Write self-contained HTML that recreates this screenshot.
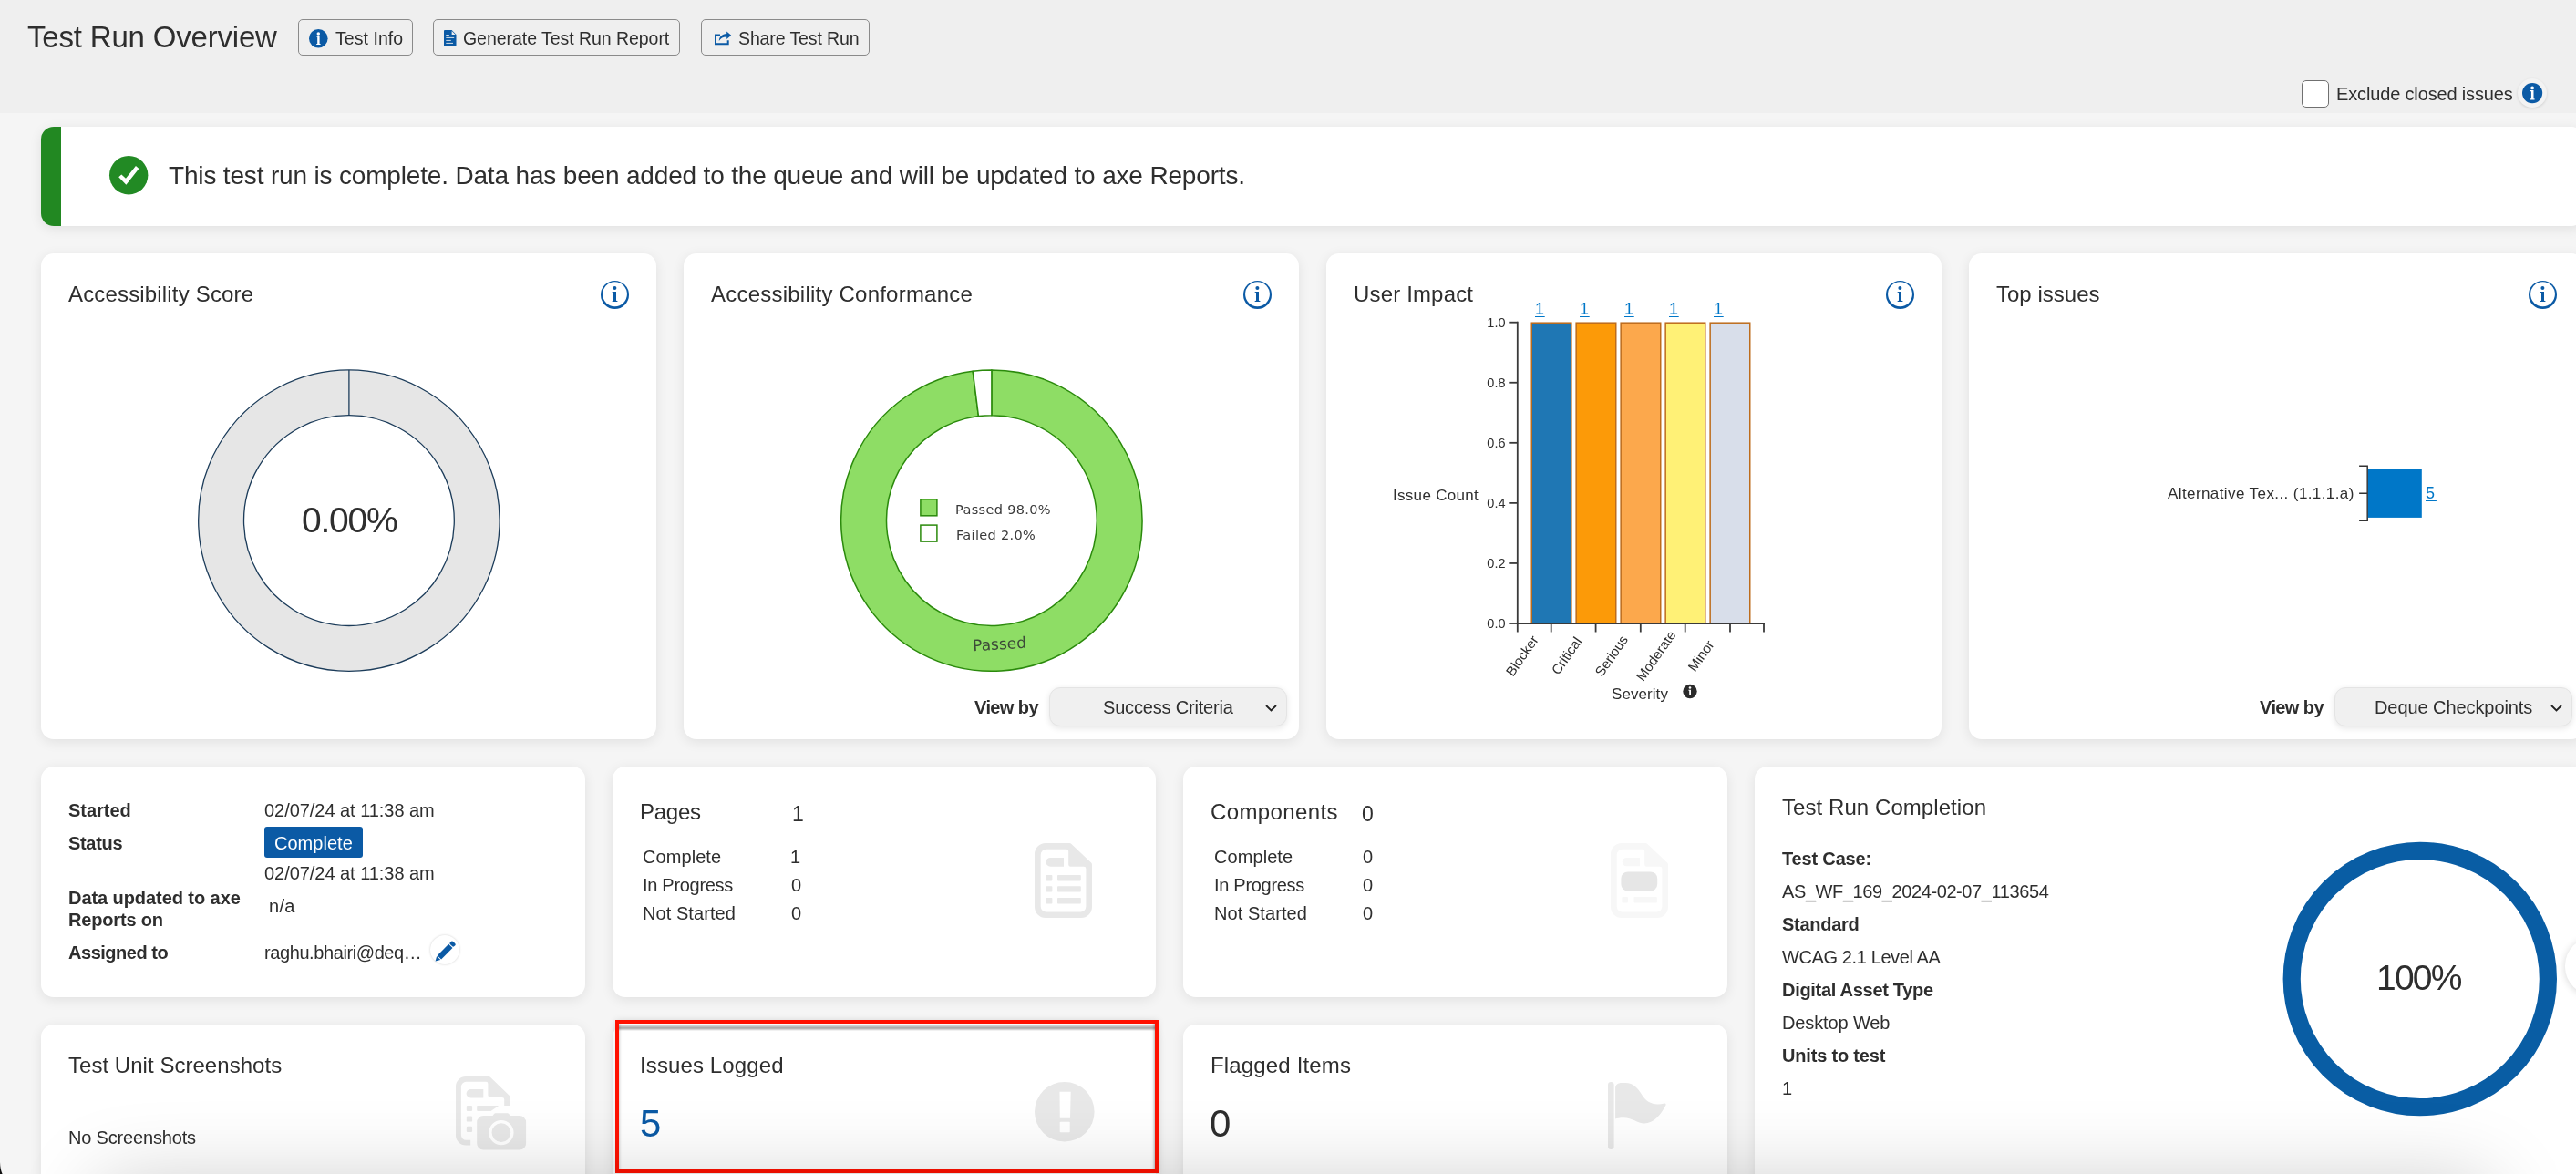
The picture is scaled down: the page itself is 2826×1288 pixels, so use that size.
<!DOCTYPE html>
<html lang="en"><head><meta charset="utf-8"><title>Test Run Overview</title>
<style>
html,body{margin:0;padding:0}
html{overflow:hidden;width:2826px;height:1288px;background:#f5f5f5}
body{width:2826px;height:1288px;overflow:hidden;position:relative;background:#f5f5f5;font-family:"Liberation Sans",sans-serif;color:#2e2e2e}
.t{position:absolute;white-space:pre;line-height:1;will-change:transform;margin:0;font-weight:400}
.a{position:absolute}
.card{position:absolute;background:#fff;border-radius:14px;box-shadow:0 3px 14px rgba(0,0,0,.085)}
.btn{position:absolute;box-sizing:border-box;border:1.2px solid #8a8a8a;border-radius:5px;top:21px;height:39.5px}
.sel{position:absolute;box-sizing:border-box;background:#f0f0f0;border:1px solid #e4e4e4;border-radius:12px;box-shadow:0 2px 7px rgba(0,0,0,.10);height:42.7px;top:753.9px;width:260.7px}
svg{position:absolute;overflow:visible;will-change:transform}
.u{text-decoration:underline;text-decoration-thickness:1.3px;text-underline-offset:2px}
#wrap{position:absolute;left:0;top:0;width:2826px;height:1288px;overflow:hidden}
</style></head><body><div id="wrap">
<div class="a" style="left:0;top:0;width:2826px;height:124px;background:#efefef"></div>
<h1 class="t" style='left:30.00px;top:24px;font-size:33px;letter-spacing:-0.188px;'>Test Run Overview</h1>
<div class="btn" style="left:327px;width:126px"></div>
<svg style="left:338.70px;top:31.70px" width="20.60" height="20.60" viewBox="-10.3 -10.3 20.6 20.6"><circle r="10.3" fill="#0b5aa5"/><circle cx="0" cy="-5.3" r="1.75" fill="#fff"/><path d="M-2.1 -2.9H1.3V5.6H2.3V6.8H-2.1V5.6H-1.1V-1.7H-2.1Z" fill="#fff"/></svg>
<div class="t" style='left:367.80px;top:33px;font-size:19.5px;letter-spacing:0.050px;'>Test Info</div>
<div class="btn" style="left:475px;width:271px"></div>
<svg style="left:487px;top:33.1px" width="13.5" height="18" viewBox="0 0 13.5 18"><path d="M1 0H8.6L13.5 4.9V17a1 1 0 0 1-1 1H1a1 1 0 0 1-1-1V1a1 1 0 0 1 1-1Z" fill="#0b5aa5"/><path d="M8.6 0.9V4.9H12.6Z" fill="#efefef"/><path d="M2.3 5.5H5.8M2.3 8.4H11.2M2.3 11.4H7.8M2.3 14.4H10" stroke="#efefef" stroke-width="0.9" fill="none"/></svg>
<div class="t" style='left:508.30px;top:33px;font-size:19.5px;letter-spacing:-0.043px;'>Generate Test Run Report</div>
<div class="btn" style="left:769px;width:185px"></div>
<svg style="left:783px;top:33px" width="20" height="18" viewBox="783 33 20 18"><path d="M790 38.4H785V48.3H798.7V44.2" fill="none" stroke="#0b5aa5" stroke-width="2"/><path d="M797.2 34.6L802.2 38.8L797.2 43V40.4C793.5 40.3 790.8 41.6 788.8 45C789 40.6 792 37.3 797.2 37.1Z" fill="#0b5aa5"/></svg>
<div class="t" style='left:809.90px;top:33px;font-size:19.5px;letter-spacing:-0.115px;'>Share Test Run</div>
<div class="a" style="left:2525px;top:88px;width:30px;height:30px;box-sizing:border-box;border:1.5px solid #707070;border-radius:5px;background:#fff"></div>
<div class="t" style='left:2562.50px;top:93px;font-size:20px;letter-spacing:-0.150px;'>Exclude closed issues</div>
<div class="a" style="left:2762px;top:86px;width:32.4px;height:32.4px;border-radius:50%;background:#f3f3f3;box-shadow:0 1px 3px rgba(0,0,0,.13)"></div>
<svg style="left:2766.90px;top:91.30px" width="22.20" height="22.20" viewBox="-10.3 -10.3 20.6 20.6"><circle r="10.3" fill="#0b5aa5"/><circle cx="0" cy="-5.3" r="1.75" fill="#fff"/><path d="M-2.1 -2.9H1.3V5.6H2.3V6.8H-2.1V5.6H-1.1V-1.7H-2.1Z" fill="#fff"/></svg>
<div class="card" style="left:45px;top:139px;width:2790px;height:109px;overflow:hidden"><div style="position:absolute;left:0;top:0;width:22px;height:100%;background:#228822"></div></div>
<svg style="left:119.6px;top:171.4px" width="42.4" height="42.4" viewBox="-21.2 -21.2 42.4 42.4"><circle r="21.2" fill="#228a24"/><path d="M-11 2.15L-7.9 -0.66L-3.2 3.58L7.77 -10.2L11.2 -7.3L-2.8 10.6Z" fill="#fff"/></svg>
<div class="t" style='left:184.80px;top:179px;font-size:28px;letter-spacing:-0.170px;'>This test run is complete. Data has been added to the queue and will be updated to axe Reports.</div>
<div class="card" style="left:45px;top:278px;width:675px;height:533px"></div>
<div class="card" style="left:750px;top:278px;width:675px;height:533px"></div>
<div class="card" style="left:1455px;top:278px;width:675px;height:533px"></div>
<div class="card" style="left:2160px;top:278px;width:675px;height:533px"></div>
<h2 class="t" style='left:75.00px;top:311px;font-size:24px;letter-spacing:0.167px;'>Accessibility Score</h2>
<svg style="left:659.00px;top:307.80px" width="31" height="31" viewBox="-15.5 -15.5 31 31"><circle r="15.5" fill="#0b5aa5"/><circle cx="0" cy="-0.75" r="13.4" fill="#fff"/><circle cx="-0.1" cy="-7.4" r="2" fill="#0b5aa5"/><path d="M-2.9 -3.6H1.5V6.3L3 6.8V7.6H-2.9V6.8L-1.5 6.3V-2.4L-2.9 -2.8Z" fill="#0b5aa5"/></svg>
<h2 class="t" style='left:780.00px;top:311px;font-size:24px;letter-spacing:0.225px;'>Accessibility Conformance</h2>
<svg style="left:1364.00px;top:307.80px" width="31" height="31" viewBox="-15.5 -15.5 31 31"><circle r="15.5" fill="#0b5aa5"/><circle cx="0" cy="-0.75" r="13.4" fill="#fff"/><circle cx="-0.1" cy="-7.4" r="2" fill="#0b5aa5"/><path d="M-2.9 -3.6H1.5V6.3L3 6.8V7.6H-2.9V6.8L-1.5 6.3V-2.4L-2.9 -2.8Z" fill="#0b5aa5"/></svg>
<h2 class="t" style='left:1485.00px;top:311px;font-size:24px;letter-spacing:0.160px;'>User Impact</h2>
<svg style="left:2069.00px;top:307.80px" width="31" height="31" viewBox="-15.5 -15.5 31 31"><circle r="15.5" fill="#0b5aa5"/><circle cx="0" cy="-0.75" r="13.4" fill="#fff"/><circle cx="-0.1" cy="-7.4" r="2" fill="#0b5aa5"/><path d="M-2.9 -3.6H1.5V6.3L3 6.8V7.6H-2.9V6.8L-1.5 6.3V-2.4L-2.9 -2.8Z" fill="#0b5aa5"/></svg>
<h2 class="t" style='left:2190.00px;top:311px;font-size:24px;letter-spacing:0.011px;'>Top issues</h2>
<svg style="left:2774.00px;top:307.80px" width="31" height="31" viewBox="-15.5 -15.5 31 31"><circle r="15.5" fill="#0b5aa5"/><circle cx="0" cy="-0.75" r="13.4" fill="#fff"/><circle cx="-0.1" cy="-7.4" r="2" fill="#0b5aa5"/><path d="M-2.9 -3.6H1.5V6.3L3 6.8V7.6H-2.9V6.8L-1.5 6.3V-2.4L-2.9 -2.8Z" fill="#0b5aa5"/></svg>
<div class="card" style="left:45px;top:841px;width:597px;height:253px"></div>
<div class="card" style="left:671.5px;top:841px;width:596.5px;height:253px"></div>
<div class="card" style="left:1298px;top:841px;width:597px;height:253px"></div>
<div class="card" style="left:1924.5px;top:841px;width:910.5px;height:560px"></div>
<div class="card" style="left:45px;top:1124px;width:597px;height:230px"></div>
<div class="card" style="left:671.5px;top:1124px;width:596.5px;height:230px"></div>
<div class="card" style="left:1298px;top:1124px;width:597px;height:230px"></div>
<div class="a" style="left:675px;top:1119px;width:596px;height:168px;box-sizing:border-box;border:4px solid #ff1100;background:#fff;box-shadow:0 0 7px rgba(0,0,0,.10),inset 3px 0 3px -2px rgba(0,0,0,.18),inset -3px 0 3px -2px rgba(0,0,0,.3)"><div style="position:absolute;left:0;right:0;top:0.8px;height:7.6px;background:linear-gradient(rgba(60,80,80,.13),rgba(0,0,0,.35) 56%,rgba(0,0,0,0))"></div></div>
<svg style="left:0;top:0" width="2826" height="1288" viewBox="0 0 2826 1288">
<path d="M382.9 405.9A165.2 165.2 0 1 1 382.89 405.9ZM382.9 455.7A115.4 115.4 0 1 0 382.91 455.7Z" fill="#e6e6e6" fill-rule="evenodd" stroke="#1c3c5a" stroke-width="1.3"/>
<path d="M382.9 405.9V455.7" stroke="#1c3c5a" stroke-width="1.3"/>
<path d="M1087.90 405.90A165.2 165.2 0 1 1 1067.19 407.20L1073.44 456.61A115.4 115.4 0 1 0 1087.90 455.70Z" fill="#8edd65" stroke="#2b8a0c" stroke-width="1.5" stroke-linejoin="round"/>
<path d="M1067.19 407.20A165.2 165.2 0 0 1 1087.90 405.90L1087.90 455.70A115.4 115.4 0 0 0 1073.44 456.61Z" fill="#fff" stroke="#2b8a0c" stroke-width="1.5" stroke-linejoin="round"/>
<rect x="1009.9" y="547.8" width="18" height="18" fill="#8edd65" stroke="#2b8a0c" stroke-width="1.5"/>
<rect x="1009.9" y="576.1" width="18" height="18" fill="#fff" stroke="#2b8a0c" stroke-width="1.5"/>
<text x="1096.5" y="712.5" font-family='"DejaVu Sans", sans-serif' font-size="17" fill="#3c4a38" text-anchor="middle" transform="rotate(-3.6 1096.5 706.6)">Passed</text>
<rect x="1680.25" y="354.2" width="43.6" height="329.8" fill="#1f77b4" stroke="#bd6c1c" stroke-width="1.5"/>
<rect x="1729.15" y="354.2" width="43.6" height="329.8" fill="#fc9a08" stroke="#bd6c1c" stroke-width="1.5"/>
<rect x="1778.15" y="354.2" width="43.6" height="329.8" fill="#fca84c" stroke="#bd6c1c" stroke-width="1.5"/>
<rect x="1827.15" y="354.2" width="43.6" height="329.8" fill="#fff176" stroke="#bd6c1c" stroke-width="1.5"/>
<rect x="1876.15" y="354.2" width="43.6" height="329.8" fill="#d8deea" stroke="#bd6c1c" stroke-width="1.5"/>
<path d="M1664.8 352.7V685" stroke="#3a3a3a" stroke-width="1.8"/>
<path d="M1663.8 684H1936" stroke="#3a3a3a" stroke-width="1.8"/>
<path d="M1655.3 684.00H1664.8" stroke="#3a3a3a" stroke-width="1.8"/>
<text x="1651.5" y="689.00" font-size="14.5" fill="#2e2e2e" text-anchor="end">0.0</text>
<path d="M1655.3 617.94H1664.8" stroke="#3a3a3a" stroke-width="1.8"/>
<text x="1651.5" y="622.94" font-size="14.5" fill="#2e2e2e" text-anchor="end">0.2</text>
<path d="M1655.3 551.88H1664.8" stroke="#3a3a3a" stroke-width="1.8"/>
<text x="1651.5" y="556.88" font-size="14.5" fill="#2e2e2e" text-anchor="end">0.4</text>
<path d="M1655.3 485.82H1664.8" stroke="#3a3a3a" stroke-width="1.8"/>
<text x="1651.5" y="490.82" font-size="14.5" fill="#2e2e2e" text-anchor="end">0.6</text>
<path d="M1655.3 419.76H1664.8" stroke="#3a3a3a" stroke-width="1.8"/>
<text x="1651.5" y="424.76" font-size="14.5" fill="#2e2e2e" text-anchor="end">0.8</text>
<path d="M1655.3 353.70H1664.8" stroke="#3a3a3a" stroke-width="1.8"/>
<text x="1651.5" y="358.70" font-size="14.5" fill="#2e2e2e" text-anchor="end">1.0</text>
<path d="M1664.8 684V693.5" stroke="#3a3a3a" stroke-width="1.8"/>
<path d="M1701.7 684V693.5" stroke="#3a3a3a" stroke-width="1.8"/>
<path d="M1750.6 684V693.5" stroke="#3a3a3a" stroke-width="1.8"/>
<path d="M1799.8 684V693.5" stroke="#3a3a3a" stroke-width="1.8"/>
<path d="M1848.7 684V693.5" stroke="#3a3a3a" stroke-width="1.8"/>
<path d="M1898 684V693.5" stroke="#3a3a3a" stroke-width="1.8"/>
<path d="M1935 684V693.5" stroke="#3a3a3a" stroke-width="1.8"/>
<text x="1674.0" y="722.4" font-size="15" fill="#2e2e2e" text-anchor="middle" transform="rotate(-55 1674.0 722.4)">Blocker</text>
<text x="1722.9" y="722.4" font-size="15" fill="#2e2e2e" text-anchor="middle" transform="rotate(-55 1722.9 722.4)">Critical</text>
<text x="1772.1" y="722.4" font-size="15" fill="#2e2e2e" text-anchor="middle" transform="rotate(-55 1772.1 722.4)">Serious</text>
<text x="1821.0" y="722.4" font-size="15" fill="#2e2e2e" text-anchor="middle" transform="rotate(-55 1821.0 722.4)">Moderate</text>
<text x="1870.3" y="722.4" font-size="15" fill="#2e2e2e" text-anchor="middle" transform="rotate(-55 1870.3 722.4)">Minor</text>
<circle cx="1854" cy="758.5" r="7.7" fill="#2b2b2b"/><circle cx="1854" cy="754.5" r="1.3" fill="#fff"/><path d="M1852.4 756.7H1855V762H1855.8V763H1852.4V762H1853.2V757.7H1852.4Z" fill="#fff"/>
<path d="M2588.1 511.3H2597.2V571.3H2588.1M2588.1 541.3H2597.2" fill="none" stroke="#333" stroke-width="1.5"/>
<rect x="2597.9" y="514.7" width="58.9" height="53.2" fill="#0077c8"/>
<circle cx="2654.8" cy="1074" r="140.6" fill="none" stroke="#095da4" stroke-width="19.2"/>
</svg>
<div class="t" style='left:330.60px;top:551px;font-size:39px;letter-spacing:-1.250px;'>0.00%</div>
<div class="t" style='left:1048.40px;top:552px;font-size:14.5px;letter-spacing:0.336px;color:#3a3a3a;font-family:"DejaVu Sans", "Liberation Sans", sans-serif;'>Passed 98.0%</div>
<div class="t" style='left:1048.60px;top:580px;font-size:14.5px;letter-spacing:0.320px;color:#3a3a3a;font-family:"DejaVu Sans", "Liberation Sans", sans-serif;'>Failed 2.0%</div>
<div class="t" style='left:1068.80px;top:766px;font-size:20px;letter-spacing:-0.600px;font-weight:700;'>View by</div>
<div class="sel" style="left:1151px"></div>
<div class="t" style='left:1209.60px;top:766px;font-size:20px;letter-spacing:-0.187px;'>Success Criteria</div>
<svg style="left:1387.6px;top:772.5px" width="13" height="8" viewBox="0 0 13 8"><path d="M1 1L6.5 6.5L12 1" fill="none" stroke="#222" stroke-width="1.8"/></svg>
<div class="t" style='left:2478.80px;top:766px;font-size:20px;letter-spacing:-0.600px;font-weight:700;'>View by</div>
<div class="sel" style="left:2561.3px"></div>
<div class="t" style='left:2605.00px;top:766px;font-size:20px;letter-spacing:-0.075px;'>Deque Checkpoints</div>
<svg style="left:2798px;top:772.5px" width="13" height="8" viewBox="0 0 13 8"><path d="M1 1L6.5 6.5L12 1" fill="none" stroke="#222" stroke-width="1.8"/></svg>
<div class="t" style='left:1527.80px;top:535px;font-size:17px;letter-spacing:0.300px;'>Issue Count</div>
<a class="t u" style='left:1684.00px;top:330px;font-size:18px;letter-spacing:0.684px;color:#0077c8;'>1</a>
<a class="t u" style='left:1732.90px;top:330px;font-size:18px;letter-spacing:0.684px;color:#0077c8;'>1</a>
<a class="t u" style='left:1781.90px;top:330px;font-size:18px;letter-spacing:0.684px;color:#0077c8;'>1</a>
<a class="t u" style='left:1830.90px;top:330px;font-size:18px;letter-spacing:0.684px;color:#0077c8;'>1</a>
<a class="t u" style='left:1879.90px;top:330px;font-size:18px;letter-spacing:0.684px;color:#0077c8;'>1</a>
<div class="t" style='left:1768.00px;top:753px;font-size:17px;letter-spacing:0.071px;'>Severity</div>
<div class="t" style='left:2378.30px;top:533px;font-size:17px;letter-spacing:0.407px;'>Alternative Tex... (1.1.1.a)</div>
<a class="t u" style='left:2661.10px;top:532px;font-size:18px;letter-spacing:1.884px;color:#0077c8;'>5</a>
<div class="t" style='left:75.00px;top:879px;font-size:20px;letter-spacing:-0.033px;font-weight:700;'>Started</div>
<div class="t" style='left:289.80px;top:879px;font-size:20px;letter-spacing:-0.042px;'>02/07/24 at 11:38 am</div>
<div class="t" style='left:75.00px;top:915px;font-size:20px;letter-spacing:-0.320px;font-weight:700;'>Status</div>
<div class="a" style="left:289.6px;top:907.3px;width:108px;height:33.8px;border-radius:3px;background:#0b5aa5"></div>
<div class="t" style='left:300.50px;top:915px;font-size:20px;letter-spacing:0.029px;color:#fff;'>Complete</div>
<div class="t" style='left:289.80px;top:948px;font-size:20px;letter-spacing:-0.042px;'>02/07/24 at 11:38 am</div>
<div class="t" style='left:75.00px;top:975px;font-size:20px;letter-spacing:-0.067px;font-weight:700;'>Data updated to axe</div>
<div class="t" style='left:75.00px;top:999px;font-size:20px;letter-spacing:-0.167px;font-weight:700;'>Reports on</div>
<div class="t" style='left:295.20px;top:984px;font-size:20px;letter-spacing:0.300px;'>n/a</div>
<div class="t" style='left:75.00px;top:1035px;font-size:20px;letter-spacing:-0.470px;font-weight:700;'>Assigned to</div>
<div class="t" style='left:289.80px;top:1035px;font-size:20px;letter-spacing:-0.406px;'>raghu.bhairi@deq…</div>
<div class="a" style="left:472.300px;top:1026.300px;width:32.100px;height:32.100px;border-radius:50%;background:#fff;box-shadow:0 0 2.500px rgba(0,0,0,.2)"></div>
<svg style="left:0;top:0" width="2826" height="1288" viewBox="0 0 2826 1288"><g transform="translate(477.6 1054.6) rotate(-45)" fill="#0b5aa5"><path d="M0 0L5.100 -2.900V2.900Z"/><path d="M6.100 -3.050H23.700V3.050H6.100Z"/><rect x="24.700" y="-3.050" width="4.300" height="6.100" rx="1.300"/></g></svg>
<h2 class="t" style='left:701.50px;top:879px;font-size:24px;letter-spacing:-0.250px;'>Pages</h2>
<div class="t" style='left:868.50px;top:882px;font-size:23px;'>1</div>
<div class="t" style='left:705.10px;top:930px;font-size:20px;letter-spacing:0.071px;'>Complete</div>
<div class="t" style='left:867.00px;top:930px;font-size:20px;'>1</div>
<div class="t" style='left:705.10px;top:961px;font-size:20px;letter-spacing:-0.300px;'>In Progress</div>
<div class="t" style='left:868.00px;top:961px;font-size:20px;'>0</div>
<div class="t" style='left:705.10px;top:992px;font-size:20px;letter-spacing:0.070px;'>Not Started</div>
<div class="t" style='left:868.00px;top:992px;font-size:20px;'>0</div>
<h2 class="t" style='left:1328.00px;top:879px;font-size:24px;letter-spacing:0.378px;'>Components</h2>
<div class="t" style='left:1493.80px;top:882px;font-size:23px;'>0</div>
<div class="t" style='left:1331.60px;top:930px;font-size:20px;letter-spacing:0.071px;'>Complete</div>
<div class="t" style='left:1494.80px;top:930px;font-size:20px;'>0</div>
<div class="t" style='left:1331.60px;top:961px;font-size:20px;letter-spacing:-0.300px;'>In Progress</div>
<div class="t" style='left:1494.80px;top:961px;font-size:20px;'>0</div>
<div class="t" style='left:1331.60px;top:992px;font-size:20px;letter-spacing:0.070px;'>Not Started</div>
<div class="t" style='left:1494.80px;top:992px;font-size:20px;'>0</div>
<svg style="left:1135.1px;top:925px" width="63" height="82" viewBox="0 0 63 82"><path d="M12 0H38.3Q39.500 0 40.4 0.900L62.100 21.600Q63 22.500 63 23.700V70a12 12 0 0 1-12 12H12a12 12 0 0 1-12-12V12a12 12 0 0 1 12-12Z" fill="#e8e8e8"/><path d="M12.700 6.700H35a2.200 2.200 0 0 1 2.200 2.200V23.500a2.300 2.300 0 0 0 2.300 2.300H54a2.400 2.400 0 0 1 2.400 2.400V69.400a6 6 0 0 1-6 6H12.700a6 6 0 0 1-6-6V12.700a6 6 0 0 1 6-6Z" fill="#fff"/><g fill="#e8e8e8"><path d="M17.400 15.900H32V25.800H17.400a4.950 4.950 0 0 1 0-9.900Z"/><rect x="12.400" y="35.100" width="7" height="6.300" rx="0.800"/><rect x="25" y="35.100" width="25.800" height="6.300" rx="0.800"/><rect x="12.400" y="47.300" width="7" height="6.300" rx="0.800"/><rect x="25" y="47.300" width="25.800" height="6.300" rx="0.800"/><rect x="12.400" y="59.900" width="7" height="6.600" rx="0.800"/><rect x="25" y="59.900" width="25.800" height="6.600" rx="0.800"/></g></svg>
<svg style="left:1767px;top:925px" width="63" height="82" viewBox="0 0 63 82"><path d="M12 0H38.3Q39.500 0 40.4 0.900L62.100 21.600Q63 22.500 63 23.700V70a12 12 0 0 1-12 12H12a12 12 0 0 1-12-12V12a12 12 0 0 1 12-12Z" fill="#f7f7f7"/><path d="M12.700 6.700H35a2.200 2.200 0 0 1 2.200 2.200V23.500a2.300 2.300 0 0 0 2.300 2.300H54a2.400 2.400 0 0 1 2.400 2.400V69.400a6 6 0 0 1-6 6H12.700a6 6 0 0 1-6-6V12.700a6 6 0 0 1 6-6Z" fill="#fff"/><g fill="#f7f7f7"><path d="M17.400 15.900H32V25.300H17.400a4.700 4.700 0 0 1 0-9.400Z"/><rect x="12.400" y="59" width="6.500" height="6.600" rx="0.800"/><rect x="25.500" y="59" width="25.300" height="6.600" rx="0.800"/></g><rect x="11.400" y="31.400" width="39.800" height="21.100" rx="7.500" fill="#e6e6e6"/></svg>
<h2 class="t" style='left:1954.50px;top:874px;font-size:24px;letter-spacing:0.067px;'>Test Run Completion</h2>
<div class="t" style='left:1954.50px;top:932px;font-size:20px;letter-spacing:-0.167px;font-weight:700;'>Test Case:</div>
<div class="t" style='left:1954.50px;top:968px;font-size:20px;letter-spacing:-0.400px;'>AS_WF_169_2024-02-07_113654</div>
<div class="t" style='left:1954.50px;top:1004px;font-size:20px;letter-spacing:-0.271px;font-weight:700;'>Standard</div>
<div class="t" style='left:1954.50px;top:1040px;font-size:20px;letter-spacing:-0.387px;'>WCAG 2.1 Level AA</div>
<div class="t" style='left:1954.50px;top:1076px;font-size:20px;letter-spacing:-0.294px;font-weight:700;'>Digital Asset Type</div>
<div class="t" style='left:1954.50px;top:1112px;font-size:20px;letter-spacing:-0.120px;'>Desktop Web</div>
<div class="t" style='left:1954.50px;top:1148px;font-size:20px;letter-spacing:-0.183px;font-weight:700;'>Units to test</div>
<div class="t" style='left:1954.50px;top:1184px;font-size:20px;'>1</div>
<div class="t" style='left:2607.30px;top:1053px;font-size:39px;letter-spacing:-1.800px;'>100%</div>
<h2 class="t" style='left:75.00px;top:1157px;font-size:24px;letter-spacing:0.035px;'>Test Unit Screenshots</h2>
<div class="t" style='left:75.00px;top:1238px;font-size:20px;letter-spacing:-0.169px;'>No Screenshots</div>
<h2 class="t" style='left:701.50px;top:1157px;font-size:24px;letter-spacing:0.117px;'>Issues Logged</h2>
<div class="t" style='left:702.00px;top:1212px;font-size:42px;color:#0b5aa5;'>5</div>
<h2 class="t" style='left:1328.00px;top:1157px;font-size:24px;letter-spacing:0.158px;'>Flagged Items</h2>
<div class="t" style='left:1327.20px;top:1212px;font-size:42px;'>0</div>
<svg style="left:499.9px;top:1180.9px" width="78" height="81" viewBox="0 0 78 81"><g fill="#e8e8e8"><path d="M11 0H36.100Q37.300 0 38.200 0.900L58.400 20.600Q59.300 21.500 59.300 22.700V31.900H53.200V25.200a2.300 2.300 0 0 0-2.300-2.300H37.700a2.300 2.300 0 0 1-2.300-2.300V8a2.200 2.200 0 0 0-2.200-2.200H11.400a5.500 5.500 0 0 0-5.500 5.500V64.300a5.500 5.500 0 0 0 5.500 5.500H16.200V75.400H11a11 11 0 0 1-11-11V11a11 11 0 0 1 11-11Z"/><path d="M16.300 14H30.300V23.400H16.300a4.700 4.700 0 0 1 0-9.400Z"/><rect x="11.800" y="31.900" width="6.300" height="6" rx="1.200"/><rect x="11.800" y="43.600" width="6.300" height="6" rx="1.200"/><rect x="11.800" y="54.800" width="6.300" height="6.100" rx="1.200"/><path d="M24 31.900H47.100L38.500 37.900H24a0.800 0.800 0 0 1-0.800-0.800V32.700a0.800 0.800 0 0 1 0.800-0.800Z"/><path d="M30.200 43.100H40.500L42.300 40.800Q42.700 40.300 43.400 40.300H56.900Q57.600 40.300 58 40.800L59.800 43.100H70.100a7 7 0 0 1 7 7V73.600a7 7 0 0 1-7 7H30.200a7 7 0 0 1-7-7V50.100a7 7 0 0 1 7-7Z"/></g><circle cx="49.900" cy="61.600" r="12" fill="none" stroke="#fff" stroke-width="3.300"/></svg>
<svg style="left:1134.7px;top:1187.100px" width="65.600" height="65.600" viewBox="-32.800 -32.800 65.600 65.600"><circle r="32.800" fill="#e8e8e8"/><path d="M-5.300 -22.100H6.900L6.200 6.900H-5Z" fill="#fff"/><rect x="-5.100" y="11" width="11" height="11.400" rx="0.800" fill="#fff"/></svg>
<svg style="left:1763.6px;top:1187px" width="64" height="74" viewBox="0 0 64 74"><g fill="#e8e8e8"><rect x="0" y="0" width="6.600" height="74" rx="3.300"/><path d="M8.100 7C8.100 3 11 1 15 1H19C28 1 33 7 37.500 14.500C42 22 50 26.500 62 23.500C63.500 23.200 64 24.500 63.300 25.800C58 36 50 45.500 40 45.500C32 45.500 27 39.300 17 39.300C13 39.300 10 40 8.100 40.500Z"/></g></svg>
<div class="a" style="left:110px;top:1299px;width:2620px;height:200px;box-shadow:0 0 90px rgba(0,0,0,.215)"></div>
<div class="a" style="left:2813.7px;top:1028.4px;width:63.2px;height:63.2px;border-radius:50%;background:#fff;box-shadow:0 1px 9px rgba(0,0,0,.16)"></div>
<svg style="left:0;top:1274px" width="4" height="14" viewBox="0 1274 4 14"><path d="M0 1275Q0.200 1283 2.600 1288H0Z" fill="#111"/></svg>
</div></body></html>
